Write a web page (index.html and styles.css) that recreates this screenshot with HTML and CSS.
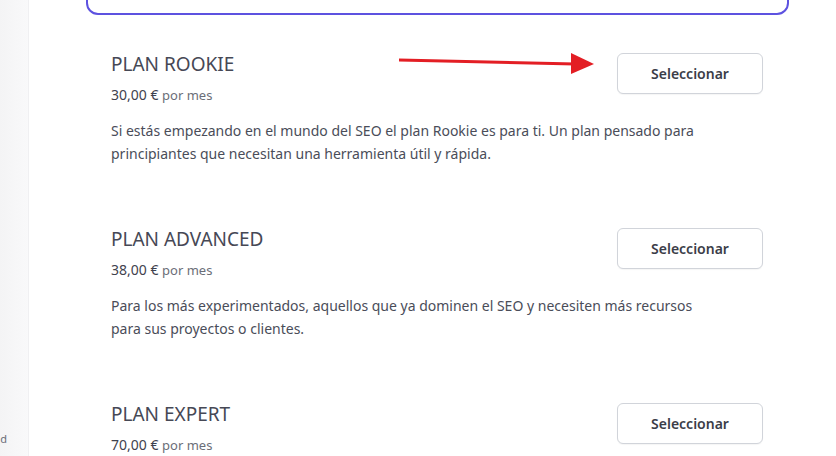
FILE: index.html
```html
<!doctype html>
<html lang="es">
<head>
  <meta charset="UTF-8">
  <title>Planes</title>
  <link rel="stylesheet" href="styles.css">
</head>
<body>
  <div class="layout">
    <aside class="sidebar">
      <span class="sidebar-link">Privacidad</span>
    </aside>
    <main class="main">
      <div class="current-box"></div>

      <section class="plan">
        <div class="plan-head">
          <div>
            <h3 class="plan-title">PLAN ROOKIE</h3>
            <p class="plan-price">30,00 € <span>por mes</span></p>
          </div>
          <button class="plan-btn">Seleccionar</button>
        </div>
        <p class="plan-desc">Si estás empezando en el mundo del SEO el plan Rookie es para ti. Un plan pensado para principiantes que necesitan una herramienta útil y rápida.</p>
        <svg class="arrow" width="200" height="24" viewBox="0 0 200 24">
          <line x1="0" y1="8" x2="176" y2="12" stroke="#e31e24" stroke-width="3"/>
          <polygon points="172,1 195,12 172,22" fill="#e31e24"/>
        </svg>
      </section>

      <section class="plan">
        <div class="plan-head">
          <div>
            <h3 class="plan-title">PLAN ADVANCED</h3>
            <p class="plan-price">38,00 € <span>por mes</span></p>
          </div>
          <button class="plan-btn">Seleccionar</button>
        </div>
        <p class="plan-desc">Para los más experimentados, aquellos que ya dominen el SEO y necesiten más recursos para sus proyectos o clientes.</p>
      </section>

      <section class="plan">
        <div class="plan-head">
          <div>
            <h3 class="plan-title">PLAN EXPERT</h3>
            <p class="plan-price">70,00 € <span>por mes</span></p>
          </div>
          <button class="plan-btn">Seleccionar</button>
        </div>
      </section>
    </main>
  </div>
</body>
</html>
```

FILE: styles.css
```css
html, body{
  margin: 0;
  height: 100%;
  overflow: hidden;
  background: #fff;
  font-family: "Noto Sans", "Open Sans", sans-serif;
}

.layout{
  display: flex;
  height: 456px;
}

.sidebar{
  width: 29px;
  flex-shrink: 0;
  background: linear-gradient(to right, #f4f4f5, #f9f9fa);
  border-right: 1px solid #f0f0f2;
  overflow: hidden;
  display: flex;
  align-items: flex-end;
  justify-content: flex-end;
  padding-bottom: 10px;
  box-sizing: border-box;
}

.sidebar-link{
  font-size: 11px;
  color: #6b6e78;
  white-space: nowrap;
  margin-right: 21px;
}

.main{
  flex: 1;
  padding: 0 73px 0 82px;
  box-sizing: border-box;
}

.current-box{
  height: 40px;
  margin: -29px -26px 35px -25px;
  border: 2px solid #5d52e0;
  border-radius: 12px;
}

.plan{
  position: relative;
  margin-bottom: 60px;
}

.plan-head{
  display: flex;
  justify-content: space-between;
  align-items: flex-start;
}

.plan-title{
  margin: 0;
  font-size: 19px;
  line-height: 28px;
  font-weight: 400;
  color: #464855;
}

.plan-price{
  margin: 7px 0 0;
  font-size: 14px;
  line-height: 20px;
  color: #3f424e;
}

.plan-price span{
  font-size: 13px;
  color: #6b6e78;
}

.plan-btn{
  margin-top: 3px;
  width: 146px;
  height: 41px;
  background: #fff;
  border: 1px solid #d1d4da;
  border-radius: 6px;
  font-family: inherit;
  font-size: 14px;
  font-weight: 600;
  color: #3b3d48;
  box-shadow: 0 1px 1px rgba(0,0,0,0.04);
}

.plan-desc{
  margin: 14px 0 0;
  font-size: 14px;
  line-height: 23px;
  color: #4a4d59;
  max-width: 612px;
}

.arrow{
  position: absolute;
  left: 288px;
  top: 2px;
}
```
